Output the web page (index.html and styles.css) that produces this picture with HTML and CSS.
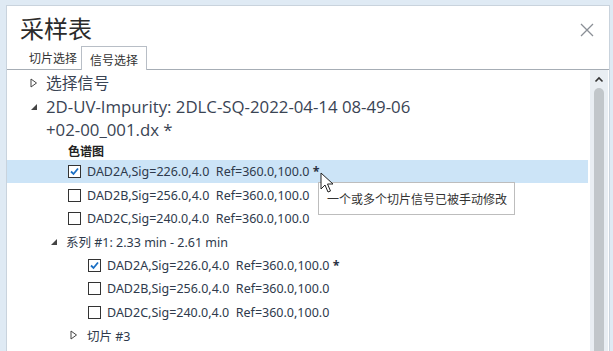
FILE: index.html
```html
<!DOCTYPE html>
<html lang="zh">
<head>
<meta charset="utf-8">
<link rel="stylesheet" href="styles.css">
</head>
<body>
<div class="window">
  <div class="header">
    <div class="title">采样表</div>
    <svg class="close" width="14" height="14" viewBox="0 0 14 14"><path d="M1 1L13 13M13 1L1 13" stroke="#8a8f96" stroke-width="1.3" fill="none"/></svg>
  </div>
  <div class="tabs">
    <div class="tab">切片选择</div>
    <div class="tab active">信号选择</div>
  </div>
  <div class="content">
    <div class="tree">
      <div class="row big">
        <svg class="tri" width="8" height="10" viewBox="0 0 8 10"><path d="M1 1L6.5 5L1 9Z" fill="none" stroke="#444" stroke-width="1"/></svg>
        <span>选择信号</span>
      </div>
      <div class="row big wrap">
        <svg class="tri" width="8" height="10" viewBox="0 0 8 10"><path d="M7 2L7 8L1 8Z" fill="#444"/></svg>
        <span class="latin">2D-UV-Impurity: 2DLC-SQ-2022-04-14 08-49-06<br>+02-00_001.dx *</span>
      </div>
      <div class="row group l1">色谱图</div>
      <div class="row item l1 selected">
        <span class="cb checked"><svg width="11" height="11" viewBox="0 0 11 11"><path d="M2 5.5L4.5 8L9 2.5" stroke="#1a6fc4" stroke-width="1.8" fill="none"/></svg></span>
        <span>DAD2A,Sig=226.0,4.0&nbsp;&nbsp;Ref=360.0,100.0 <b class="star">*</b></span>
      </div>
      <div class="row item l1"><span class="cb"></span><span>DAD2B,Sig=256.0,4.0&nbsp;&nbsp;Ref=360.0,100.0</span></div>
      <div class="row item l1"><span class="cb"></span><span>DAD2C,Sig=240.0,4.0&nbsp;&nbsp;Ref=360.0,100.0</span></div>
      <div class="row item l0b">
        <svg class="tri" width="8" height="10" viewBox="0 0 8 10"><path d="M7 2L7 8L1 8Z" fill="#444"/></svg>
        <span>系列 #1: 2.33 min - 2.61 min</span>
      </div>
      <div class="row item l2">
        <span class="cb checked"><svg width="11" height="11" viewBox="0 0 11 11"><path d="M2 5.5L4.5 8L9 2.5" stroke="#1a6fc4" stroke-width="1.8" fill="none"/></svg></span>
        <span>DAD2A,Sig=226.0,4.0&nbsp;&nbsp;Ref=360.0,100.0 <b class="star">*</b></span>
      </div>
      <div class="row item l2"><span class="cb"></span><span>DAD2B,Sig=256.0,4.0&nbsp;&nbsp;Ref=360.0,100.0</span></div>
      <div class="row item l2"><span class="cb"></span><span>DAD2C,Sig=240.0,4.0&nbsp;&nbsp;Ref=360.0,100.0</span></div>
      <div class="row item l1b">
        <svg class="tri" width="8" height="10" viewBox="0 0 8 10"><path d="M1 1L6.5 5L1 9Z" fill="none" stroke="#444" stroke-width="1"/></svg>
        <span>切片 #3</span>
      </div>
    </div>
    <div class="scrollbar">
      <svg class="up" width="10" height="7" viewBox="0 0 10 7"><path d="M1.5 5.5L5 2L8.5 5.5" stroke="#333" stroke-width="1.6" fill="none"/></svg>
      <div class="thumb"></div>
    </div>
    <div class="tooltip">一个或多个切片信号已被手动修改</div>
    <svg class="cursor" width="14" height="22" viewBox="0 0 14 22"><path d="M1 1L1 17L5 13L8 20L10.5 19L7.5 12L13 12Z" fill="#fff" stroke="#222" stroke-width="1" stroke-linejoin="round"/></svg>
  </div>
</div>
</body>
</html>
```
FILE: styles.css
```css
html, body { margin: 0; padding: 0; }
body {
  background: #dfeaf4;
  width: 613px;
  height: 351px;
  overflow: hidden;
  font-family: "Noto Sans", "Noto Sans CJK SC", sans-serif;
}
.window {
  margin: 5px 3px 0 6px;
  height: 360px;
  background: #fff;
  border: 1px solid #c9d3dd;
  border-bottom: none;
  box-sizing: border-box;
  display: flex;
  flex-direction: column;
}
.header {
  display: flex;
  align-items: center;
  justify-content: space-between;
  height: 39px;
  padding: 0 15px 0 13px;
}
.title {
  font-family: "Noto Sans CJK SC", sans-serif;
  font-size: 24px;
  line-height: 30px;
  color: #2b2b2b;
  margin-top: 5px;
}
.close { margin-top: 8px; }
.tabs {
  display: flex;
  align-items: flex-end;
  height: 24px;
  padding-left: 22px;
  border-bottom: 1px solid #a6adb5;
}
.tab {
  font-family: "Noto Sans CJK SC", sans-serif;
  font-size: 12px;
  color: #333;
  padding: 0 4px 2px 0;
  line-height: 18px;
}
.tab.active {
  border: 1px solid #b8bec6;
  border-bottom: none;
  background: #fff;
  padding: 2px 8px 0 8px;
  line-height: 21px;
  margin-bottom: -1px;
}
.content {
  position: relative;
  flex: 1;
  display: flex;
  min-height: 0;
}
.tree {
  flex: 1;
  padding-top: 1px;
  color: #323d4c;
}
.row {
  display: flex;
  align-items: center;
  height: 23.4px;
  white-space: nowrap;
}
.row .tri { flex: none; }
.big {
  font-size: 15.8px;
  padding-left: 23px;
  color: #3a4454;
  height: 23px;
}
.big .tri { margin-right: 8px; }
.big.wrap {
  height: 46px;
  align-items: flex-start;
  line-height: 23px;
  margin-top: 1px;
}
.big .latin { font-family: "Open Sans", "Noto Sans CJK SC", sans-serif; font-size: 16.8px; }
.big.wrap .tri { margin-top: 7px; }
.group {
  font-family: "Noto Sans CJK SC", sans-serif;
  font-weight: bold;
  font-size: 12px;
  color: #222;
  height: 19px;
  padding-left: 58px;
}
.item {
  font-size: 12.5px;
  color: #2e3a4c;
}
.l1 { padding-left: 61px; margin-right: 2px; }
.l2 { padding-left: 81px; }
.l0b { padding-left: 43px; }
.l0b .tri { margin-right: 8px; }
.l1b { padding-left: 63px; }
.l1b .tri { margin-right: 9px; }
.selected { background: #cce4f7; }
.cb {
  width: 11px;
  height: 11px;
  border: 1px solid #333;
  background: #fff;
  margin-right: 6px;
  display: flex;
  align-items: center;
  justify-content: center;
  flex: none;
}
.star { font-weight: bold; color: #2a3444; }
.scrollbar {
  width: 18px;
  background: #e9eef3;
  position: relative;
  display: flex;
  flex-direction: column;
  align-items: center;
  margin-right: 1px;
}
.up { margin-top: 6px; }
.thumb {
  width: 10px;
  flex: 1;
  margin-top: 5px;
  background: #c1c6ca;
  border-radius: 5px 5px 0 0;
}
.tooltip {
  position: absolute;
  left: 311px;
  top: 112px;
  width: 197px;
  height: 33px;
  box-sizing: border-box;
  border: 1px solid #bdbdbd;
  background: #fff;
  font-family: "Noto Sans CJK SC", sans-serif;
  font-size: 12px;
  color: #333;
  line-height: 31px;
  padding-left: 8px;
}
.cursor {
  position: absolute;
  left: 313px;
  top: 102px;
}
```
